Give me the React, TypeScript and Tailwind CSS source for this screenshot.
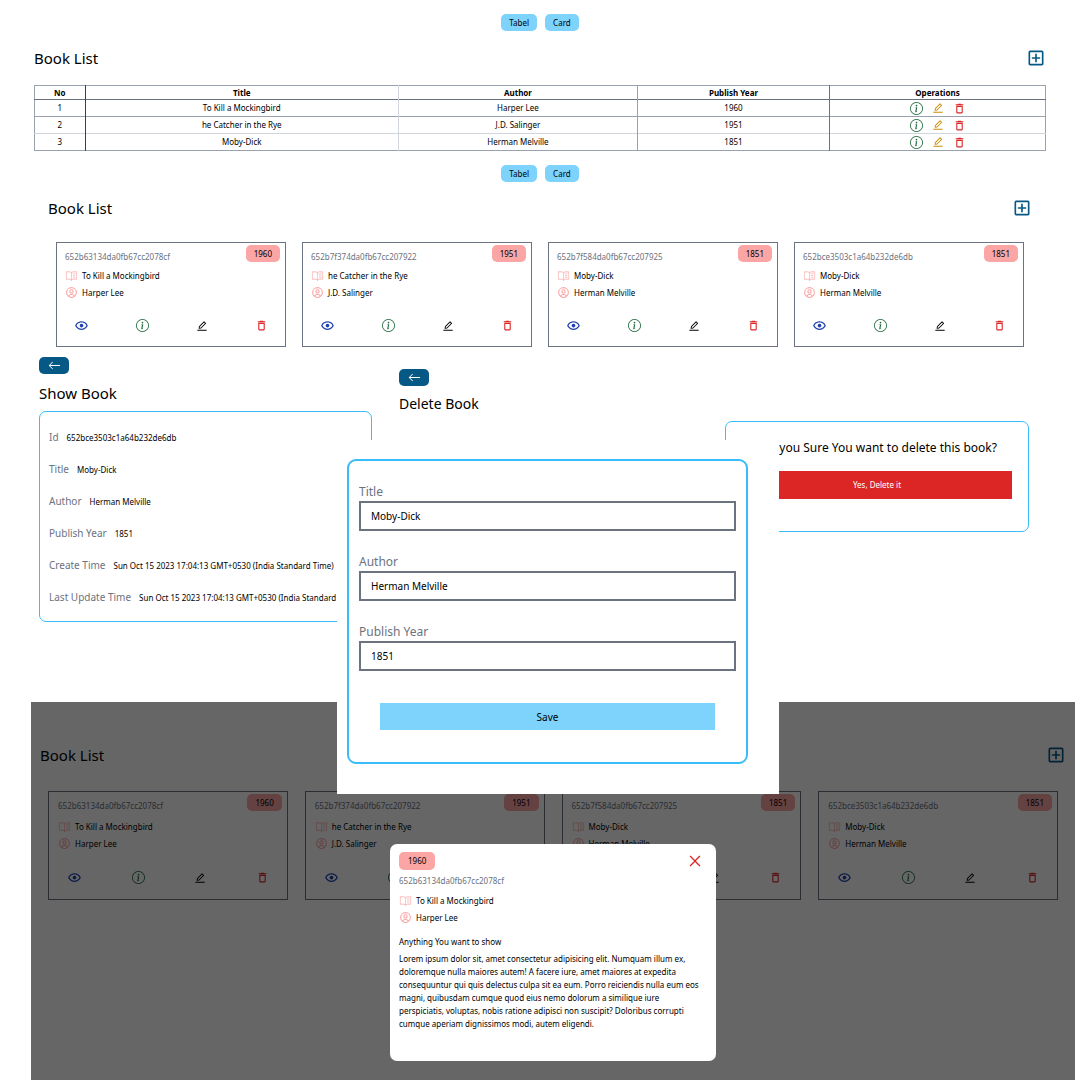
import { AiOutlineClose, AiOutlineEdit } from "react-icons/ai";
import { BiShow, BiUserCircle } from "react-icons/bi";
import { BsArrowLeft, BsInfoCircle } from "react-icons/bs";
import { MdOutlineAddBox, MdOutlineDelete } from "react-icons/md";
import { PiBookOpenTextLight } from "react-icons/pi";

type Book = { id: string; title: string; author: string; year: number };

const books: Book[] = [
  { id: "652b63134da0fb67cc2078cf", title: "To Kill a Mockingbird", author: "Harper Lee", year: 1960 },
  { id: "652b7f374da0fb67cc207922", title: "he Catcher in the Rye", author: "J.D. Salinger", year: 1951 },
  { id: "652b7f584da0fb67cc207925", title: "Moby-Dick", author: "Herman Melville", year: 1851 },
  { id: "652bce3503c1a64b232de6db", title: "Moby-Dick", author: "Herman Melville", year: 1851 },
];

const bookFields = [
  ["Id", "652bce3503c1a64b232de6db"],
  ["Title", "Moby-Dick"],
  ["Author", "Herman Melville"],
  ["Publish Year", "1851"],
  ["Create Time", "Sun Oct 15 2023 17:04:13 GMT+0530 (India Standard Time)"],
  ["Last Update Time", "Sun Oct 15 2023 17:04:13 GMT+0530 (India Standard Time)"],
];

const editFields = [
  ["Title", "Moby-Dick"],
  ["Author", "Herman Melville"],
  ["Publish Year", "1851"],
];

function ViewSwitch() {
  return (
    <div className="flex justify-center gap-2">
      <button className="h-[17px] rounded-[5px] bg-[#7dd3fc] px-2 leading-[17px]">Tabel</button>
      <button className="h-[17px] rounded-[5px] bg-[#7dd3fc] px-2 leading-[17px]">Card</button>
    </div>
  );
}

function ListHeader() {
  return (
    <div className="flex h-5 items-center justify-between">
      <h1 className="text-[15px] leading-5">Book List</h1>
      <button aria-label="Add book" className="text-[20px] text-[#075985]">
        <MdOutlineAddBox />
      </button>
    </div>
  );
}

function BackButton() {
  return (
    <a
      href="#back"
      aria-label="Back"
      className="flex h-[17px] w-[30px] items-center justify-center rounded-[5px] bg-[#075985] text-[13px] text-white"
    >
      <BsArrowLeft />
    </a>
  );
}

function BookLines({ book }: { book: Book }) {
  return (
    <>
      <div className="flex h-[17px] items-center gap-1">
        <PiBookOpenTextLight className="text-[13px] text-[#fca5a5]" />
        <h2>{book.title}</h2>
      </div>
      <div className="flex h-[17px] items-center gap-1">
        <BiUserCircle className="text-[13px] text-[#fca5a5]" />
        <h2>{book.author}</h2>
      </div>
    </>
  );
}

function BookCard({ book, roomy = false }: { book: Book; roomy?: boolean }) {
  return (
    <article
      className={`relative border border-[#6b7280] pt-[7px] ${roomy ? "px-[9px] pb-[14px]" : "px-2 pb-[13px]"}`}
    >
      <span className="absolute top-[2px] right-[5px] rounded-[5px] bg-[#fca5a5] px-2 leading-[17px]">{book.year}</span>
      <h3 className={`leading-[14px] text-[#6b7280] ${roomy ? "mb-[5px]" : "mb-[3px]"}`}>{book.id}</h3>
      <BookLines book={book} />
      <div className={`flex items-center justify-between px-[9px] text-[15px] ${roomy ? "mt-[18px]" : "mt-[17px]"}`}>
        <button aria-label="Preview" className="text-[#1e40af]">
          <BiShow />
        </button>
        <a href="#details" aria-label="Details" className="text-[13px] text-[#166534]">
          <BsInfoCircle />
        </a>
        <a href="#edit" aria-label="Edit" className="text-[12px] text-black">
          <AiOutlineEdit />
        </a>
        <a href="#delete" aria-label="Delete" className="text-[13px] text-[#dc2626]">
          <MdOutlineDelete />
        </a>
      </div>
    </article>
  );
}

function BookTable() {
  return (
    <table className="w-full table-fixed border-collapse border border-gray-400 text-center">
      <colgroup>
        <col className="w-[5%]" />
        <col className="w-[31%]" />
        <col className="w-[239px]" />
        <col className="w-[19%]" />
        <col />
      </colgroup>
      <thead>
        <tr className="h-[14px] border-b border-gray-500 leading-[13px]">
          <th className="border-r border-slate-700">No</th>
          <th className="border-r border-gray-300">Title</th>
          <th className="border-r border-gray-400">Author</th>
          <th className="border-r border-slate-500">Publish Year</th>
          <th>Operations</th>
        </tr>
      </thead>
      <tbody>
        {books.slice(0, 3).map((book, i) => (
          <tr key={book.id} className="h-[17px] border-b border-gray-300 leading-4 first:border-gray-400 last:border-gray-400">
            <td className="border-r border-slate-700">{i + 1}</td>
            <td className="border-r border-gray-300">{book.title}</td>
            <td className="border-r border-gray-400">{book.author}</td>
            <td className="border-r border-slate-500">{book.year}</td>
            <td>
              <div className="flex items-center justify-center gap-[9px] text-[13px]">
                <a href="#details" aria-label="Details" className="text-[#166534]">
                  <BsInfoCircle />
                </a>
                <a href="#edit" aria-label="Edit" className="text-[12px] text-[#ca8a04]">
                  <AiOutlineEdit />
                </a>
                <a href="#delete" aria-label="Delete" className="text-[#dc2626]">
                  <MdOutlineDelete />
                </a>
              </div>
            </td>
          </tr>
        ))}
      </tbody>
    </table>
  );
}

function ShowBook() {
  return (
    <section className="w-[333px] shrink-0 pt-[10px]">
      <BackButton />
      <h1 className="mt-[9px] text-[15px] leading-5">Show Book</h1>
      <dl className="mt-2 flex flex-col gap-3 rounded-[7px] border border-[#38bdf8] px-[9px] pt-[15px] pb-[14px]">
        {bookFields.map(([label, value]) => (
          <div key={label} className="flex h-5 items-baseline gap-2 leading-5 whitespace-nowrap">
            <dt className="text-[10px] text-[#6b7280]">{label}</dt>
            <dd>{value}</dd>
          </div>
        ))}
      </dl>
    </section>
  );
}

function DeleteBook() {
  return (
    <section className="flex-1 pt-[22px]">
      <BackButton />
      <h1 className="mt-2 text-[14px] leading-5">Delete Book</h1>
      <div className="mt-[7px] ml-auto flex w-[304px] flex-col items-center rounded-[7px] border border-[#38bdf8] px-4 pt-4 pb-8">
        <h3 className="text-[12px] leading-5 whitespace-nowrap">Are you Sure You want to delete this book?</h3>
        <button className="mt-[13px] h-7 w-full bg-[#dc2626] text-white">Yes, Delete it</button>
      </div>
    </section>
  );
}

function EditPanel() {
  return (
    <form className="w-[442px] bg-white pt-[19px] pr-[31px] pb-[30px] pl-[10px]">
      <div className="rounded-[9px] border-2 border-[#38bdf8] px-[10px] pt-[22px] pb-8">
        <div className="flex flex-col gap-[22px]">
          {editFields.map(([label, value]) => (
            <div key={label}>
              <label htmlFor={label} className="block text-[12px] leading-[18px] text-[#6b7280]">
                {label}
              </label>
              <input
                id={label}
                defaultValue={value}
                className="block h-[30px] w-full border-2 border-[#6b7280] px-[10px] text-[10px] outline-none"
              />
            </div>
          ))}
        </div>
        <div className="mt-8 px-[21px]">
          <button type="button" className="h-[27px] w-full bg-[#7dd3fc] text-[10px]">
            Save
          </button>
        </div>
      </div>
    </form>
  );
}

function BookModal({ book }: { book: Book }) {
  return (
    <div role="dialog" aria-label={book.title} className="relative h-[217px] w-[326px] rounded-[7px] bg-white px-[9px] pt-2">
      <button aria-label="Close" className="absolute top-[9px] right-[13px] text-[16px] text-[#dc2626]">
        <AiOutlineClose />
      </button>
      <span className="inline-block rounded-[5px] bg-[#fca5a5] px-[9px] leading-[18px]">{book.year}</span>
      <h3 className="mt-[3px] mb-[3px] leading-4 text-[#6b7280]">{book.id}</h3>
      <BookLines book={book} />
      <p className="mt-2 leading-4">Anything You want to show</p>
      <p className="mt-[2px] leading-[13px] whitespace-nowrap">
        Lorem ipsum dolor sit, amet consectetur adipisicing elit. Numquam illum ex,
        <br />
        doloremque nulla maiores autem! A facere iure, amet maiores at expedita
        <br />
        consequuntur qui quis delectus culpa sit ea eum. Porro reiciendis nulla eum eos
        <br />
        magni, quibusdam cumque quod eius nemo dolorum a similique iure
        <br />
        perspiciatis, voluptas, nobis ratione adipisci non suscipit? Doloribus corrupti
        <br />
        cumque aperiam dignissimos modi, autem eligendi.
      </p>
    </div>
  );
}

export default function App() {
  return (
    <main className="overflow-hidden bg-white font-['Noto_Sans',sans-serif] text-[8px] leading-4 text-black">
      <section className="px-[34px] pt-[14px]">
        <ViewSwitch />
        <div className="mt-[17px] mb-[17px]">
          <ListHeader />
        </div>
        <BookTable />
      </section>

      <section className="pt-[14px]">
        <ViewSwitch />
        <div className="mt-4 mb-6 px-12">
          <ListHeader />
        </div>
        <div className="grid grid-cols-4 gap-4 px-14">
          {books.map((book) => (
            <BookCard key={book.id} book={book} />
          ))}
        </div>
      </section>

      <div className="relative z-10 flex gap-[27px] pr-[51px] pb-[80px] pl-[39px]">
        <ShowBook />
        <DeleteBook />
        <div className="absolute inset-x-0 top-[93px] flex justify-center pl-9">
          <EditPanel />
        </div>
      </div>

      <section className="relative mr-[5px] ml-[31px] pt-[43px] pb-[180px]">
        <div className="mb-[26px] px-[9px]">
          <ListHeader />
        </div>
        <div className="grid grid-cols-4 gap-[17px] px-[17px]">
          {books.map((book) => (
            <BookCard key={book.id} book={book} roomy />
          ))}
        </div>
        <div className="absolute inset-0 flex items-end justify-center bg-black/60 pb-[19px]">
          <BookModal book={books[0]} />
        </div>
      </section>
    </main>
  );
}
